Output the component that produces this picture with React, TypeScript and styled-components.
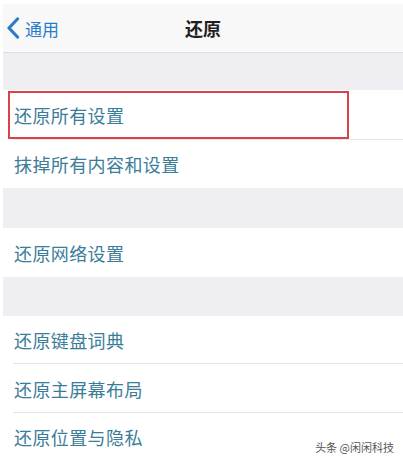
import React from 'react';
import styled, { createGlobalStyle } from 'styled-components';

const GlobalStyle = createGlobalStyle`
  html, body {
    margin: 0;
    padding: 0;
    background: #ffffff;
  }
  body {
    font-family: "Noto Sans CJK SC", "Noto Sans", sans-serif;
  }
`;

const Screen = styled.div`
  position: relative;
  width: 403px;
  height: 460px;
  overflow: hidden;
  background: #ffffff;
  padding: 4px 0 0 3px;
  box-sizing: border-box;
`;

const NavBar = styled.div`
  position: relative;
  height: 48px;
  display: flex;
  align-items: center;
  justify-content: center;
  background: #f8f8f9;
  border-bottom: 1px solid #dedee2;
`;

const BackButton = styled.div`
  position: absolute;
  left: 3px;
  top: 0;
  bottom: 0;
  display: flex;
  align-items: center;
  gap: 5px;
  color: #2a7ccb;
  font-size: 17px;
`;

const Title = styled.div`
  font-size: 18px;
  font-weight: 700;
  color: #1f1f1f;
`;

const Band = styled.div<{ $h: number }>`
  height: ${p => p.$h}px;
  background: #efeff3;
`;

const Group = styled.div`
  background: #ffffff;
`;

const Row = styled.div<{ $h: number; $divider?: boolean }>`
  position: relative;
  height: ${p => p.$h}px;
  display: flex;
  align-items: center;
  padding-left: 11px;
  font-size: 18px;
  color: #3b7d99;
  letter-spacing: 0.4px;
  &::after {
    content: '';
    display: ${p => (p.$divider ? 'block' : 'none')};
    position: absolute;
    left: 10px;
    right: 0;
    bottom: 0;
    height: 1px;
    background: #e6e6ea;
  }
`;

const Highlight = styled.div`
  position: absolute;
  left: 5px;
  top: 1px;
  width: 337px;
  height: 44px;
  border: 2px solid #d8434b;
`;

const Watermark = styled.div`
  position: absolute;
  right: 9px;
  bottom: 5px;
  font-size: 11px;
  color: #555555;
  font-family: "Noto Sans CJK SC", sans-serif;
`;

const Chevron = () => (
  <svg width="14" height="22" viewBox="0 0 14 22">
    <path d="M11.5 2 L3 11 L11.5 20" fill="none" stroke="#2a7ccb" strokeWidth="3.2" strokeLinecap="round" strokeLinejoin="round" />
  </svg>
);

export default function App() {
  return (
    <>
      <GlobalStyle />
      <Screen>
        <NavBar>
          <BackButton>
            <Chevron />
            <span>通用</span>
          </BackButton>
          <Title>还原</Title>
        </NavBar>
        <Band $h={37} />
        <Group>
          <Row $h={50} $divider>
            还原所有设置
            <Highlight />
          </Row>
          <Row $h={48}>抹掉所有内容和设置</Row>
        </Group>
        <Band $h={40} />
        <Group>
          <Row $h={49}>还原网络设置</Row>
        </Group>
        <Band $h={39} />
        <Group>
          <Row $h={48} $divider>还原键盘词典</Row>
          <Row $h={49} $divider>还原主屏幕布局</Row>
          <Row $h={48}>还原位置与隐私</Row>
        </Group>
        <Watermark>头条 @闲闲科技</Watermark>
      </Screen>
    </>
  );
}
